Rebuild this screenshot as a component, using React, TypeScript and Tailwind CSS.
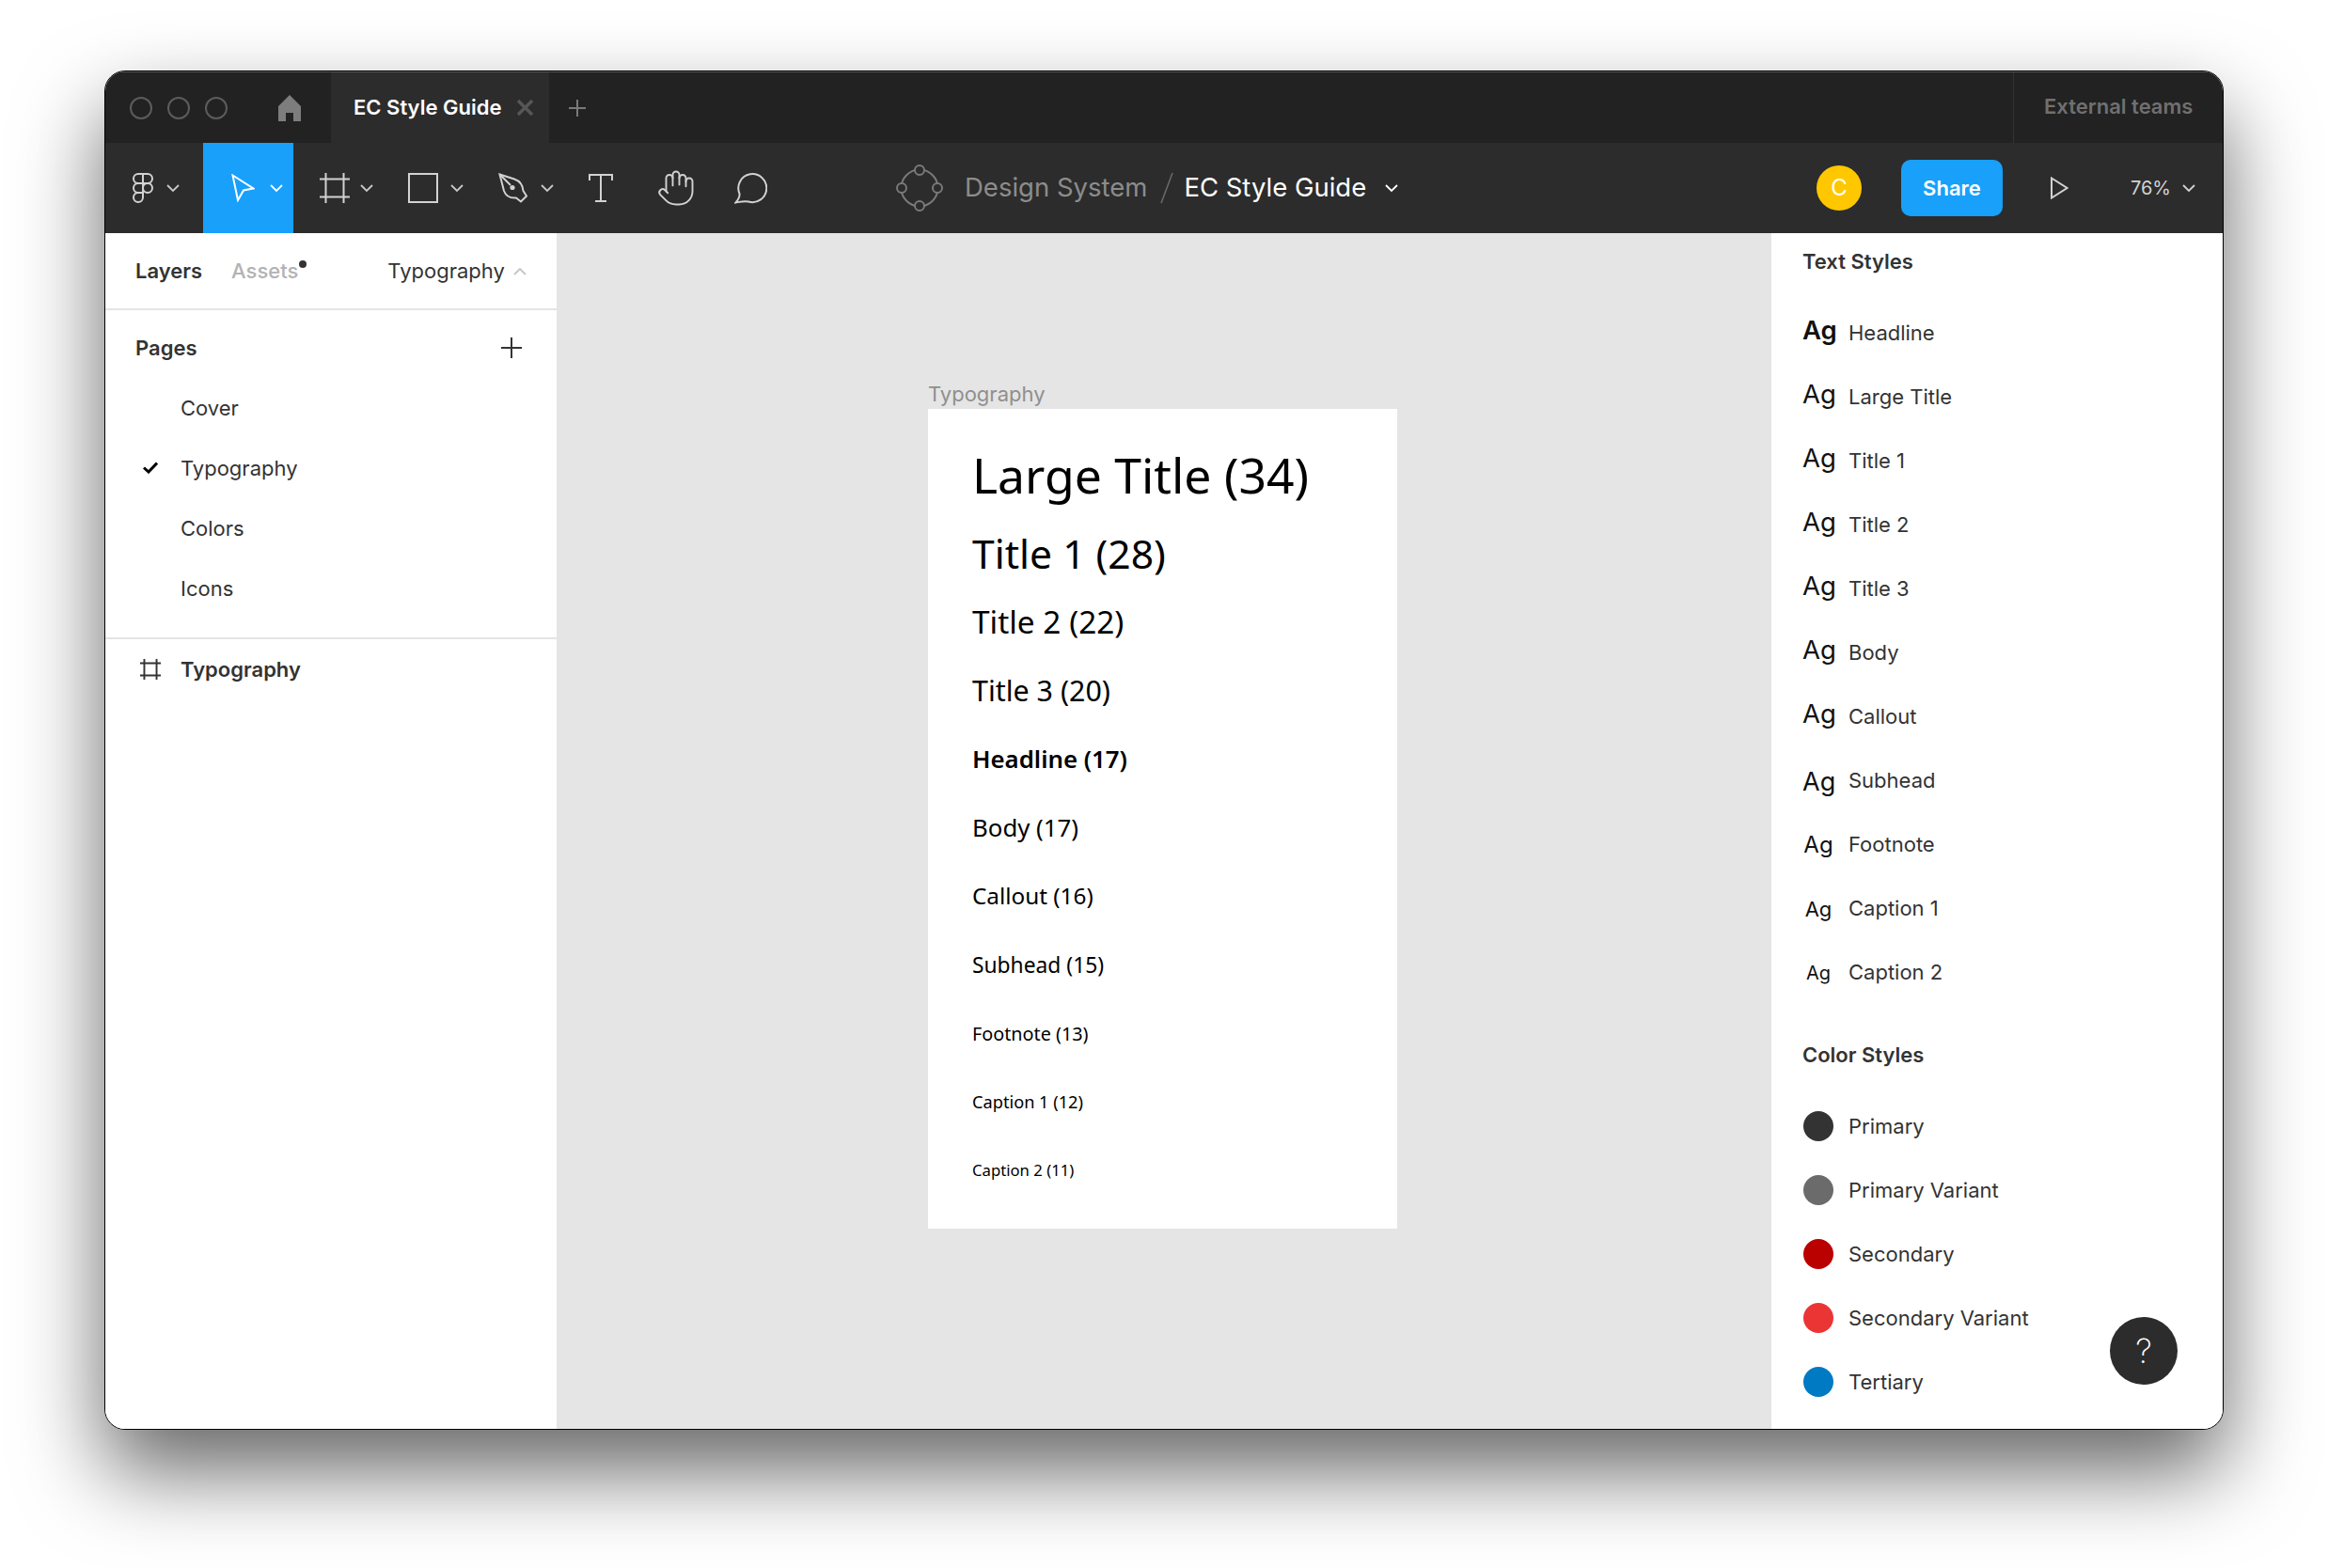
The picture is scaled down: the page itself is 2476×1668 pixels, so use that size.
import React from 'react'
import { Hand } from 'lucide-react'

const Chevron: React.FC<{ className?: string; up?: boolean }> = ({ className = 'text-[#c8c8c8]', up }) => (
  <svg width="14" height="9" viewBox="0 0 14 9" fill="none" className={className}>
    <path d={up ? 'M1 8L7 2L13 8' : 'M1 1L7 7L13 1'} stroke="currentColor" strokeWidth="1.8" />
  </svg>
)

const FigmaLogo = () => (
  <svg width="22" height="32" viewBox="0 0 22 32" fill="none" stroke="#d2d2d2" strokeWidth="2">
    <path d="M11 1H6a5 5 0 0 0 0 10h5z" />
    <path d="M11 1h5a5 5 0 0 1 0 10h-5z" />
    <path d="M11 11H6a5 5 0 0 0 0 10h5z" />
    <circle cx="16" cy="16" r="5" />
    <path d="M11 21H6a5 5 0 1 0 5 5z" />
  </svg>
)

const CursorIcon = () => (
  <svg width="25" height="30" viewBox="0 0 25 30" fill="none" stroke="#fff" strokeWidth="2">
    <path d="M1.5 1.5L23.5 15.5L13 17.5L7 28z" />
  </svg>
)

const FrameIcon: React.FC<{ size?: number; color?: string; sw?: number }> = ({ size = 32, color = '#d2d2d2', sw = 2 }) => (
  <svg width={size} height={size} viewBox="0 0 32 32" fill="none" stroke={color} strokeWidth={sw}>
    <path d="M6.5 0V32M25.5 0V32M0 6.5H32M0 25.5H32" />
  </svg>
)

const PenIcon = () => (
  <svg width="31" height="32" viewBox="0 0 31 32" fill="none" stroke="#d2d2d2" strokeWidth="2">
    <path d="M1.5 1.5L17 6.5C23 8.5 26 13 26.5 19L30 24.5L24 30.5L19 26.5C13 27 8 24.5 6 19z" />
    <path d="M1.5 1.5L13 13" />
    <circle cx="15" cy="15.5" r="2.6" fill="#d2d2d2" stroke="none" />
  </svg>
)

const TextIcon = () => (
  <svg width="26" height="30" viewBox="0 0 26 30" fill="none" stroke="#d2d2d2" strokeWidth="2">
    <path d="M1 7V1H25V7M13 1V29M7 29H19" />
  </svg>
)

const CommentIcon = () => (
  <svg width="35" height="33" viewBox="0 0 35 33" fill="none" stroke="#d2d2d2" strokeWidth="2">
    <path d="M5.5 22A15 15 0 1 1 15 30.5C11 29.5 7 30.5 1.5 31.5C4 28.5 6 25.5 5.5 22z" />
  </svg>
)

const ProjectLogo = () => (
  <svg width="50" height="50" viewBox="0 0 50 50" fill="#2c2c2c" stroke="#7a7a7a" strokeWidth="2">
    <circle cx="25" cy="25" r="19.5" fill="none" />
    <circle cx="25" cy="6" r="5" />
    <circle cx="44" cy="25" r="5" />
    <circle cx="25" cy="44" r="5" />
    <circle cx="6" cy="25" r="5" />
  </svg>
)

const Tool: React.FC<{ className: string; children: React.ReactNode }> = ({ className, children }) => (
  <div className={`flex h-full shrink-0 items-center ${className}`}>{children}</div>
)

const trafficLights = [0, 1, 2]
const pages = ['Cover', 'Typography', 'Colors', 'Icons']

const specimens = [
  { label: 'Large Title (34)', cls: 'h-[95px] pt-[2px] text-[51.7px]' },
  { label: 'Title 1 (28)', cls: 'h-[73px] text-[42.6px]' },
  { label: 'Title 2 (22)', cls: 'h-[73px] text-[33.4px]' },
  { label: 'Title 3 (20)', cls: 'h-[73px] text-[30.4px]' },
  { label: 'Headline (17)', cls: 'h-[73px] text-[25.8px] font-semibold' },
  { label: 'Body (17)', cls: 'h-[73px] text-[25.8px]' },
  { label: 'Callout (16)', cls: 'h-[73px] text-[24.3px]' },
  { label: 'Subhead (15)', cls: 'h-[73px] pt-[2px] text-[22.8px]' },
  { label: 'Footnote (13)', cls: 'h-[73px] text-[19.8px]' },
  { label: 'Caption 1 (12)', cls: 'h-[73px] text-[18.2px]' },
  { label: 'Caption 2 (11)', cls: 'h-[73px] pb-[2px] text-[16.7px]' }
]

const textStyles = [
  { name: 'Headline', ag: 'text-[27.5px] font-semibold -translate-y-[2px]' },
  { name: 'Large Title', ag: 'text-[27.5px] -translate-y-[2px]' },
  { name: 'Title 1', ag: 'text-[27.5px] -translate-y-[2px]' },
  { name: 'Title 2', ag: 'text-[27.5px] -translate-y-[2px]' },
  { name: 'Title 3', ag: 'text-[27.5px] -translate-y-[2px]' },
  { name: 'Body', ag: 'text-[27.5px] -translate-y-[2px]' },
  { name: 'Callout', ag: 'text-[27.5px] -translate-y-[2px]' },
  { name: 'Subhead', ag: 'text-[27px] translate-y-[1px]' },
  { name: 'Footnote', ag: 'text-[24px] translate-y-[1px]' },
  { name: 'Caption 1', ag: 'text-[22px] translate-y-[1px]' },
  { name: 'Caption 2', ag: 'text-[20px] translate-y-[1px]' }
]

const colorStyles = [
  { name: 'Primary', cls: 'bg-[#333333]' },
  { name: 'Primary Variant', cls: 'bg-[#6b6b6b]' },
  { name: 'Secondary', cls: 'bg-[#bb0000]' },
  { name: 'Secondary Variant', cls: 'bg-[#eb3535]' },
  { name: 'Tertiary', cls: 'bg-[#007ac2]' }
]

export default function App() {
  return (
    <div className="h-[1668px] w-[2476px] overflow-hidden bg-white pl-[111px] pt-[75px] font-['Inter',sans-serif]">
      <div className="flex h-[1446px] w-[2254px] flex-col overflow-hidden rounded-[22px] border border-black bg-white shadow-[0_44px_90px_rgba(0,0,0,0.6)]">
        {/* tab strip */}
        <div className="flex h-[76px] shrink-0 items-center border-t border-t-[#5a5a5a] bg-[#222222]">
          <div className="flex w-[240px] items-center pl-[26px]">
            <div className="flex gap-[16px]">
              {trafficLights.map(i => (
                <div key={i} className="h-[24px] w-[24px] rounded-full border-2 border-[#5c5c5c]" />
              ))}
            </div>
            <svg width="24" height="28" viewBox="0 0 24 28" fill="#7d7d7d" className="ml-[54px]">
              <path d="M12 0L24 12V28H16V19H8V28H0V12z" />
            </svg>
          </div>
          <div className="flex h-full w-[232px] items-center bg-[#2c2c2c] pl-[24px]">
            <span className="w-[174px] text-[22px] font-semibold text-white">EC Style Guide</span>
            <svg width="17" height="17" viewBox="0 0 17 17" stroke="#575757" strokeWidth="3.4">
              <path d="M1 1L16 16M16 1L1 16" />
            </svg>
          </div>
          <svg width="18" height="18" viewBox="0 0 18 18" stroke="#7a7a7a" strokeWidth="2" className="ml-[21px]">
            <path d="M9 0V18M0 9H18" />
          </svg>
          <div className="ml-auto flex h-full w-[223px] items-center border-l border-l-[#333333] pb-[2px] pl-[32px] text-[22px] font-semibold text-[#707070]">
            External teams
          </div>
        </div>

        {/* toolbar */}
        <div className="flex h-[96px] shrink-0 items-center bg-[#2c2c2c]">
          <Tool className="w-[104px] gap-[14px] pl-[29px]">
            <FigmaLogo />
            <Chevron />
          </Tool>
          <Tool className="w-[96px] gap-[16px] bg-[#18a0fb] pl-[30px]">
            <CursorIcon />
            <Chevron className="text-white" />
          </Tool>
          <Tool className="w-[106px] gap-[11px] pl-[28px]">
            <FrameIcon />
            <Chevron />
          </Tool>
          <Tool className="w-[96px] gap-[13px] pl-[16px]">
            <div className="h-[32px] w-[32px] border-2 border-[#d2d2d2]" />
            <Chevron />
          </Tool>
          <Tool className="w-[96px] gap-[14px] pl-[16px]">
            <PenIcon />
            <Chevron />
          </Tool>
          <Tool className="w-[66px] pl-[16px]">
            <TextIcon />
          </Tool>
          <Tool className="w-[80px] pl-[22px]">
            <Hand size={42} strokeWidth={1.1} color="#d2d2d2" />
          </Tool>
          <Tool className="w-[80px] pl-[25px]">
            <CommentIcon />
          </Tool>

          <div className="ml-[117px] flex items-center">
            <ProjectLogo />
            <span className="ml-[23px] text-[27.5px] text-[#8c8c8c]">Design System</span>
            <svg width="14" height="34" viewBox="0 0 14 34" stroke="#6a6a6a" strokeWidth="1.6" className="ml-[14px]">
              <path d="M13 1L1 33" />
            </svg>
            <span className="ml-[11px] text-[27.5px] text-white">EC Style Guide</span>
            <Chevron className="ml-[20px] text-white" />
          </div>

          <div className="ml-auto flex items-center pr-[29px]">
            <div className="flex h-[48px] w-[48px] items-center justify-center rounded-full bg-[#ffc700] text-[24px] text-white">C</div>
            <div className="ml-[42px] flex h-[60px] w-[108px] items-center justify-center rounded-[10px] bg-[#18a0fb] text-[22px] font-semibold text-white">
              Share
            </div>
            <svg width="19" height="24" viewBox="0 0 19 24" fill="none" stroke="#d2d2d2" strokeWidth="2" className="ml-[51px]">
              <path d="M1 1.5L17.5 12L1 22.5z" />
            </svg>
            <span className="ml-[66px] text-[20px] text-[#d2d2d2]">76%</span>
            <Chevron className="ml-[12px] text-[#d2d2d2]" />
          </div>
        </div>

        <div className="flex min-h-0 flex-1">
          {/* layers panel */}
          <div className="flex w-[480px] shrink-0 flex-col bg-white text-[#333333]">
            <div className="flex h-[82px] shrink-0 items-center border-b-2 border-b-[#e5e5e5] pl-[32px] text-[22px]">
              <span className="font-semibold">Layers</span>
              <span className="relative ml-[31px] font-medium text-[#b3b3b3]">
                Assets
                <span className="absolute -right-[9px] top-[5px] h-[8px] w-[8px] rounded-full bg-[#333333]" />
              </span>
              <span className="ml-[95px]">Typography</span>
              <Chevron up className="ml-[9px] text-[#c4c4c4]" />
            </div>
            <div className="flex h-[350px] shrink-0 flex-col border-b-2 border-b-[#e5e5e5]">
              <div className="flex h-[72px] items-center justify-between pl-[32px] pr-[37px] pt-[8px] text-[22px] font-semibold">
                Pages
                <svg width="22" height="22" viewBox="0 0 22 22" stroke="#333333" strokeWidth="2">
                  <path d="M11 0V22M0 11H22" />
                </svg>
              </div>
              {pages.map(p => (
                <div key={p} className="relative flex h-[64px] items-center pl-[80px] text-[22px]">
                  {p === 'Typography' && (
                    <svg width="16" height="13" viewBox="0 0 16 13" fill="none" stroke="#000" strokeWidth="3" className="absolute left-[40px] top-[25px]">
                      <path d="M1 6.5L6 11L15 1.5" />
                    </svg>
                  )}
                  {p}
                </div>
              ))}
            </div>
            <div className="flex h-[64px] items-center gap-[21px] pl-[37px] text-[22px] font-semibold">
              <FrameIcon size={22} color="#333333" sw={2.8} />
              <span>Typography</span>
            </div>
          </div>

          {/* canvas */}
          <div className="min-w-0 flex-1 bg-[#e5e5e5] pl-[395px] pt-[156px]">
            <div className="h-[31px] text-[22px] leading-[31px] text-[#8f8f8f]">Typography</div>
            <div className="h-[872px] w-[499px] bg-white pl-[47px] pt-[22px] font-['Noto_Sans',sans-serif] text-black">
              {specimens.map(s => (
                <div key={s.label} className={`flex items-center ${s.cls}`}>
                  {s.label}
                </div>
              ))}
            </div>
          </div>

          {/* styles panel */}
          <div className="relative w-[480px] shrink-0 bg-white pl-[33px] text-[#333333]">
            <div className="flex h-[60px] items-center text-[22px] font-semibold">Text Styles</div>
            <div className="mt-[12px] flex flex-col">
              {textStyles.map(s => (
                <div key={s.name} className="flex h-[68px] items-center">
                  <span className={`w-[34px] text-center leading-none text-[#111111] ${s.ag}`}>Ag</span>
                  <span className="ml-[15px] text-[22px]">{s.name}</span>
                </div>
              ))}
            </div>
            <div className="mt-[24px] flex h-[60px] items-center text-[22px] font-semibold">Color Styles</div>
            <div className="mt-[12px] flex flex-col">
              {colorStyles.map(s => (
                <div key={s.name} className="flex h-[68px] items-center">
                  <div className={`ml-[1px] h-[32px] w-[32px] rounded-full ${s.cls}`} />
                  <span className="ml-[16px] text-[22px]">{s.name}</span>
                </div>
              ))}
            </div>
            <div className="absolute bottom-[47px] right-[48px] flex h-[72px] w-[72px] items-center justify-center rounded-full bg-[#2c2c2c] text-[36px] font-extralight text-white">
              ?
            </div>
          </div>
        </div>
      </div>
    </div>
  )
}
